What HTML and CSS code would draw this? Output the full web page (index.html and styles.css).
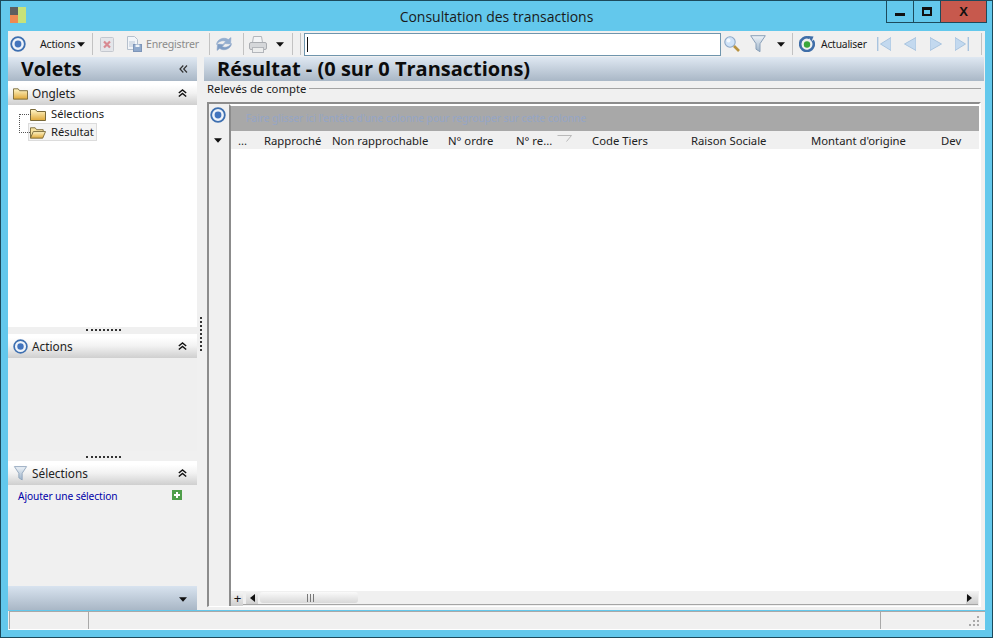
FILE: index.html
```html
<!DOCTYPE html>
<html lang="fr">
<head>
<meta charset="utf-8">
<title>Consultation des transactions</title>
<link rel="stylesheet" href="styles.css">
</head>
<body>
<svg class="defs" width="0" height="0" aria-hidden="true">
  <defs>
    <linearGradient id="fold" x1="0" y1="0" x2="0" y2="1"><stop offset="0" stop-color="#fff6c8"/><stop offset="1" stop-color="#e0a93a"/></linearGradient>
    <linearGradient id="fun" x1="0" y1="0" x2="0" y2="1"><stop offset="0" stop-color="#eef3f8"/><stop offset="1" stop-color="#9db3c9"/></linearGradient>
    <symbol id="target" viewBox="0 0 16 16"><circle cx="8" cy="8" r="6.800" fill="#eef3fa" stroke="#3d6fb0" stroke-width="1.800"/><circle cx="8" cy="8" r="3.400" fill="#4274bd"/></symbol>
    <symbol id="folder" viewBox="0 0 16 13"><path d="M.5 12.500V1.500h5l1.500 2h8.500v9z" fill="url(#fold)" stroke="#7a6a3a"/></symbol>
    <symbol id="folder-open" viewBox="0 0 17 13"><path d="M.5 12.500V1.500h5l1.500 2h7v2" fill="#f7e3a0" stroke="#7a6a3a"/><path d="M.5 12.500l3-7h13l-3 7z" fill="url(#fold)" stroke="#7a6a3a"/></symbol>
    <symbol id="funnel" viewBox="0 0 16 18"><path d="M.7.700h14.600l-5.300 8v8l-4-2.500v-5.500z" fill="url(#fun)" stroke="#8aa0b8"/></symbol>
    <symbol id="up2" viewBox="0 0 9 8"><path d="M.8 4l3.700-3 3.700 3M.8 7.500l3.700-3 3.700 3" fill="none" stroke="#111" stroke-width="1.400"/></symbol>
    <symbol id="left2" viewBox="0 0 9 8"><path d="M4.300.5l-3.300 3.500 3.300 3.500M8 .5l-3.300 3.500 3.300 3.500" fill="none" stroke="#333" stroke-width="1.200"/></symbol>
    <symbol id="caret" viewBox="0 0 9 5"><path d="M0 0h9l-4.500 5z" fill="#111"/></symbol>
  </defs>
</svg>

<div class="window">
  <header class="titlebar">
    <div class="app-logo"><i class="l1"></i><i class="l2"></i><i class="l3"></i></div>
    <h1 class="title">Consultation des transactions</h1>
    <div class="win-btns">
      <div class="wb wb-min"><i></i></div>
      <div class="wb wb-max"><i></i></div>
      <div class="wb wb-close">X</div>
    </div>
  </header>

  <nav class="toolbar">
    <svg class="ic16 t-target"><use href="#target"/></svg>
    <span class="tl t-actions">Actions</span>
    <svg class="caret t-c1"><use href="#caret"/></svg>
    <i class="sep s1"></i>
    <svg class="ic t-del" viewBox="0 0 14 15"><rect x=".5" y=".5" width="13" height="14" rx="1" fill="#e4e6ea" stroke="#c4c8cf"/><path d="M4 4.500l6 6m0-6l-6 6" stroke="#d88a92" stroke-width="2.200"/></svg>
    <svg class="ic t-doc" viewBox="0 0 16 16"><path d="M1.500.5h7l3 3v10h-10z" fill="#f2f5f9" stroke="#b5c0cd"/><path d="M3 6h6M3 8h6M3 10h6" stroke="#b9c6d6"/><rect x="7.500" y="8.500" width="8" height="7" fill="#8fa9cc" stroke="#7d95b8"/><rect x="9.500" y="8.500" width="4" height="2.500" fill="#eef3f8"/></svg>
    <span class="tl dim t-save">Enregistrer</span>
    <i class="sep s2"></i>
    <svg class="ic t-ref" viewBox="0 0 16 16"><path d="M.5 8.500C1 3 8 .5 12.300 3.500L15 1.500l-.5 6.500-7-.5 2.500-2C7 4 3 5 .5 8.500z" fill="#93aed0" stroke="#8aa5c8" stroke-width=".5"/><path d="M15.500 7.500C15 13 8 15.500 3.700 12.500L1 14.500l.5-6.500 7 .5-2.500 2C9 12 13 11 15.500 7.500z" fill="#7f9dc4" stroke="#8aa5c8" stroke-width=".5"/></svg>
    <i class="sep s3"></i>
    <svg class="ic t-print" viewBox="0 0 18 17"><path d="M4.500.5h8l1 6h-10z" fill="#f3f4f6" stroke="#b3b6bb"/><rect x=".5" y="6.500" width="17" height="7" rx="1.500" fill="#d5d7da" stroke="#a9acb1"/><rect x="3.500" y="11.500" width="11" height="5" fill="#eceded" stroke="#b3b6bb"/></svg>
    <svg class="caret t-c2"><use href="#caret"/></svg>
    <i class="sep s4"></i>
    <i class="sep s5"></i>
    <div class="search"><i class="cursor"></i></div>
    <svg class="ic t-mag" viewBox="0 0 16 16"><circle cx="6" cy="6" r="5.200" fill="#cfe3f8" stroke="#8ea8c6" stroke-width="1.100"/><circle cx="4.500" cy="4.500" r="2" fill="#f4f9fe"/><path d="M10 10l5 5" stroke="#b8923f" stroke-width="2.600"/></svg>
    <svg class="ic t-fun"><use href="#funnel"/></svg>
    <svg class="caret t-c3"><use href="#caret"/></svg>
    <i class="sep s6"></i>
    <svg class="ic t-act" viewBox="0 0 16 16"><path d="M13.700 4.500a6.800 6.800 0 1 1-3.300-2.700" fill="none" stroke="#3f6ea8" stroke-width="2.600"/><path d="M8.500 0l6 .5-2 5z" fill="#3f6ea8"/><circle cx="8" cy="8.500" r="3.200" fill="#3aa63a"/></svg>
    <span class="tl t-actu">Actualiser</span>
    <svg class="ic t-n1" viewBox="0 0 14 14"><path d="M3.500 7L14 .5v13z" fill="#c3d9ef" stroke="#a9c4df"/><path d="M.7 0v14" stroke="#a9c4df" stroke-width="1.400"/></svg>
    <svg class="ic t-n2" viewBox="0 0 12 14"><path d="M.5 7L12 .5v13z" fill="#c3d9ef" stroke="#a9c4df"/></svg>
    <svg class="ic t-n3" viewBox="0 0 12 14"><path d="M11.500 7L0 .5v13z" fill="#c3d9ef" stroke="#a9c4df"/></svg>
    <svg class="ic t-n4" viewBox="0 0 14 14"><path d="M10.500 7L0 .5v13z" fill="#c3d9ef" stroke="#a9c4df"/><path d="M13.300 0v14" stroke="#a9c4df" stroke-width="1.400"/></svg>
    <i class="sep s7"></i>
  </nav>

  <div class="main">
    <aside class="panes">
      <div class="big-head">
        <h2>Volets</h2>
        <svg class="chev"><use href="#left2"/></svg>
      </div>
      <section class="pane-head">
        <svg class="ph-ic"><use href="#folder"/></svg>
        <span>Onglets</span>
        <svg class="chev"><use href="#up2"/></svg>
      </section>
      <div class="tree">
        <div class="node n-sel"><svg class="nf"><use href="#folder"/></svg><span>Sélections</span></div>
        <div class="node n-res"><div class="picked"><svg class="nf"><use href="#folder-open"/></svg><span>Résultat</span></div></div>
      </div>
      <div class="grip"></div>
      <section class="pane-head">
        <svg class="ph-ic"><use href="#target"/></svg>
        <span>Actions</span>
        <svg class="chev"><use href="#up2"/></svg>
      </section>
      <div class="act-body"></div>
      <div class="grip"></div>
      <section class="pane-head">
        <svg class="ph-ic"><use href="#funnel"/></svg>
        <span>Sélections</span>
        <svg class="chev"><use href="#up2"/></svg>
      </section>
      <div class="sel-body">
        <a class="add-link">Ajouter une sélection</a>
        <svg class="plus" viewBox="0 0 10 10"><rect width="10" height="10" fill="#4f9e4a"/><path d="M5 2v6M2 5h6" stroke="#fff" stroke-width="2"/></svg>
      </div>
      <div class="pane-foot"><svg class="caret"><use href="#caret"/></svg></div>
    </aside>

    <div class="splitter"><i></i></div>

    <main class="result">
      <div class="big-head res-head"><h2>Résultat - (0 sur 0 Transactions)</h2></div>
      <div class="legend"><span>Relevés de compte</span><i></i></div>
      <div class="grid">
        <div class="g-side">
          <svg class="g-target"><use href="#target"/></svg>
          <svg class="caret g-caret"><use href="#caret"/></svg>
          <div class="g-plus">+</div>
        </div>
        <div class="g-main">
          <div class="g-group">Faire glisser ici l'entête d'une colonne pour regrouper sur cette colonne</div>
          <div class="g-cols">
            <span>...</span>
            <span>Rapproché</span>
            <span>Non rapprochable</span>
            <span>N° ordre</span>
            <span class="sorted">N° re...<svg class="tri" viewBox="0 0 15 7"><path d="M.5.500h14l-5 6" fill="none" stroke="#b9b9b9"/></svg></span>
            <span>Code Tiers</span>
            <span>Raison Sociale</span>
            <span>Montant d'origine</span>
            <span>Dev</span>
          </div>
          <div class="g-rows"></div>
          <div class="g-scroll">
            <div class="sb-btn"><svg viewBox="0 0 5 8"><path d="M5 0v8L0 4z" fill="#111"/></svg></div>
            <div class="sb-track"><div class="sb-thumb"><i></i><i></i><i></i></div></div>
            <div class="sb-btn sb-end"><svg viewBox="0 0 5 8"><path d="M0 0v8l5-4z" fill="#111"/></svg></div>
          </div>
        </div>
      </div>
    </main>
  </div>

  <footer class="status">
    <div class="st st1"></div>
    <div class="st st2"></div>
    <div class="st st3">
      <svg class="resize" viewBox="0 0 11 11"><path d="M8 0h2v2H8zM4 4h2v2H4zM8 4h2v2H8zM0 8h2v2H0zM4 8h2v2H4zM8 8h2v2H8z" fill="#a9a9a9"/></svg>
    </div>
  </footer>
</div>
</body>
</html>
```
FILE: styles.css
```css
* { box-sizing: border-box; }
html, body { margin: 0; padding: 0; }
body { width: 993px; height: 638px; overflow: hidden; font-family: "Noto Sans", "Open Sans", sans-serif; font-size: 11.3px; color: #1a1a1a; }
i { display: block; }
svg { display: block; flex: none; }
.defs { position: absolute; }

.window { width: 993px; height: 638px; background: #63c8ec; border: 1px solid #1c4a5c; padding: 0 7px 7px; display: flex; flex-direction: column; }

.titlebar { height: 30px; flex: none; display: grid; grid-template-columns: 1fr auto 1fr; align-items: start; }
.app-logo { width: 16px; height: 16px; margin: 6px 0 0 2px; display: grid; grid-template-columns: 8px 8px; grid-template-rows: 8px 8px; }
.app-logo .l1 { background: #5f5f5f; }
.app-logo .l2 { background: #c7e27a; grid-row: 1 / 3; grid-column: 2; }
.app-logo .l3 { background: #ef8a52; }
.title { margin: 7px 0 0; font: 400 14px/18px "Open Sans", sans-serif; color: #1a1a1a; }
.win-btns { justify-self: end; display: flex; height: 22px; margin-right: -2px; border: 1px solid #1c4a5c; border-top: 0; }
.wb { width: 27px; display: flex; align-items: center; justify-content: center; border-right: 1px solid #1c4a5c; }
.wb-min i { width: 10px; height: 3px; background: #111; margin-top: 5px; }
.wb-max i { width: 10px; height: 9px; border: 2px solid #111; border-top-width: 3px; }
.wb-close { width: 45px; background: #c7594d; border-right: 0; font: 700 13px "Liberation Sans", sans-serif; color: #111; }

.toolbar { height: 26px; flex: none; background: #f0f0f0; display: flex; align-items: center; position: relative; }
.tl { font-size: 10.6px; letter-spacing: -.2px; white-space: nowrap; flex: none; }
.dim { color: #8b8b8b; }
.sep { width: 1px; height: 22px; background: #c2c2c2; flex: none; }
.ic { width: 16px; height: 16px; }
.ic16 { width: 16px; height: 16px; }
.caret { width: 8px; height: 5px; }

.t-target { margin-left: 2px; }
.t-actions { margin-left: 14px; width: 36px; }
.t-c1 { margin-left: 1px; }
.s1 { margin-left: 7px; }
.t-del { margin-left: 7px; width: 14px; height: 15px; }
.t-doc { margin-left: 12px; }
.t-save { margin-left: 4px; width: 54px; }
.s2 { margin-left: 9px; }
.t-ref { margin-left: 6px; }
.s3 { margin-left: 11px; }
.t-print { margin-left: 5px; width: 18px; height: 17px; }
.t-c2 { margin-left: 9px; }
.s4 { margin-left: 8px; }
.s5 { margin-left: 7px; }
.search { margin-left: 3px; width: 417px; height: 23px; background: #fff; border: 1px solid #6f95ad; flex: none; padding: 3px 2px; }
.cursor { width: 1px; height: 15px; background: #111; }
.t-mag { margin-left: 3px; }
.t-fun { margin-left: 10px; height: 18px; }
.t-c3 { margin-left: 11px; }
.s6 { margin-left: 7px; }
.t-act { margin-left: 6px; }
.t-actu { margin-left: 6px; width: 47px; font-size: 10.300px; }
.t-n1 { margin-left: 9px; width: 14px; height: 14px; }
.t-n2 { margin-left: 13px; width: 12px; height: 14px; }
.t-n3 { margin-left: 14px; width: 12px; height: 14px; }
.t-n4 { margin-left: 13px; width: 14px; height: 14px; }
.s7 { margin-left: 12px; }

.main { flex: 1; min-height: 0; display: flex; background: #f0f0f0; }
.panes { width: 189px; flex: none; display: flex; flex-direction: column; }
.big-head { height: 24px; flex: none; background: linear-gradient(#dfe8f2, #a9b7c6); display: flex; align-items: center; justify-content: space-between; padding: 0 9px 0 13px; }
.big-head h2 { margin: 0; font: 700 19.500px/24px "Open Sans", sans-serif; color: #0c0c0c; white-space: nowrap; }
.res-head h2 { font-size: 20px; }
.chev { width: 9px; height: 8px; }
.pane-head { height: 24px; flex: none; background: linear-gradient(#ffffff 15%, #f2f2f2 50%, #cfcfcf); display: flex; align-items: center; padding: 0 10px 0 5px; }
.pane-head span { flex: 1; margin-left: 4px; font-size: 11.800px; color: #222; }
.ph-ic { width: 15px; height: 15px; }

.tree { height: 222px; flex: none; background: #fff; padding-left: 20px; }
.node { height: 18px; display: flex; align-items: center; position: relative; font-size: 11.200px; }
.node span { margin: -2px 0 0 5px; }
.nf { width: 16px; height: 13px; margin-left: 2px; }
.n-sel::before { content: ""; position: absolute; left: -9px; top: 9px; width: 11px; height: 18px; border-left: 1px dotted #555; border-top: 1px dotted #555; }
.n-res::before { content: ""; position: absolute; left: -9px; top: 9px; width: 11px; border-top: 1px dotted #555; }
.picked { height: 18px; width: 69px; display: flex; align-items: center; background: #f4f4f4; border: 1px solid #dcdcdc; padding-left: 1px; }
.picked .nf { margin-left: 0; }

.grip { height: 7px; flex: none; background: #f0f0f0; position: relative; }
.grip::after { content: ""; position: absolute; left: 78px; top: 2px; width: 35px; border-top: 2px dotted #333; }
.act-body { height: 93px; flex: none; background: #efefef; }
.act-body + .grip { height: 10px; }
.act-body + .grip::after { top: 5px; }
.sel-body { flex: 1; display: flex; align-items: flex-start; justify-content: space-between; padding: 4px 15px 0 10px; background: #f0f0f0; }
.add-link { color: #0000a8; font-size: 10.200px; letter-spacing: -.1px; }
.plus { width: 10px; height: 10px; margin-top: 1px; }
.pane-foot { height: 24px; flex: none; background: linear-gradient(#d8e3ef, #a9b7c6); display: flex; align-items: center; justify-content: flex-end; padding: 3px 10px 0 0; }

.splitter { width: 7px; flex: none; display: flex; align-items: center; justify-content: center; }
.splitter i { width: 0; height: 34px; border-left: 2px dotted #333; }

.result { flex: 1; min-width: 0; display: flex; flex-direction: column; }
.res-head { padding-left: 13px; margin-right: 1px; }
.legend { height: 21px; flex: none; display: flex; align-items: center; padding: 0 4px 6px 3px; }
.legend span { font-size: 11.300px; white-space: nowrap; }
.legend i { flex: 1; margin-left: 3px; height: 1px; background: #a3a3a3; }
.grid { width: 774px; height: 505px; margin-left: 3px; border: 1px solid #8c8c8c; border-top-width: 2px; border-left-width: 2px; border-right: 2px solid #fff; border-bottom-color: #fff; display: flex; background: #f0f0f0; }
.g-side { width: 20px; flex: none; display: flex; flex-direction: column; align-items: center; position: relative; padding-right: 2px; }
.g-target { width: 16px; height: 16px; margin-top: 3px; }
.g-caret { margin-top: 15px; }
.g-plus { position: absolute; left: 22px; bottom: 0; width: 12px; height: 14px; padding-left: 1px; background: linear-gradient(#f4f4f4, #cfcfcf); font: 13px/13px "Liberation Sans", sans-serif; color: #111; text-align: center; z-index: 1; }
.g-main { flex: 1; min-width: 0; display: flex; flex-direction: column; border-left: 2px solid #8c8c8c; border-top: 2px solid #fff; }
.g-group { height: 25px; flex: none; background: #a8a8a8; color: #94a5c6; font-size: 10.200px; line-height: 25px; padding-left: 15px; white-space: nowrap; overflow: hidden; }
.g-cols { height: 18px; flex: none; display: grid; grid-template-columns: 26px 68px 116px 68px 76px 99px 120px 130px 1fr; padding-left: 7px; background: #f0f0f0; font-size: 11.300px; line-height: 20px; color: #222; white-space: nowrap; }
.sorted { display: flex; align-items: center; }
.tri { width: 15px; height: 7px; margin: -6px 0 0 5px; }
.g-rows { flex: 1; background: #fff; }
.g-scroll { height: 14px; flex: none; display: flex; background: #f0f0f0; padding-left: 15px; margin: 0 1px 1px 0; border-bottom: 1px solid #a5a5a5; }
.sb-btn { width: 12px; height: 13px; background: linear-gradient(#f4f4f4, #cfcfcf); display: flex; align-items: center; justify-content: center; flex: none; }
.sb-end { padding-right: 5px; }
.sb-btn svg { width: 5px; height: 8px; }
.sb-track { flex: 1; padding: 1px 0 1px 2px; }
.sb-thumb { width: 98px; height: 11px; background: linear-gradient(#fafafa, #d8d8d8); border-radius: 3px; display: flex; justify-content: center; gap: 1px; padding: 2px 0 1px 3px; }
.sb-thumb i { width: 1px; background: #777; margin-right: 1px; }

.status { height: 19px; flex: none; display: flex; background: #f0f0f0; border-bottom: 1px solid #fff; margin-top: 1px; padding-left: 1px; }
.st { border-top: 1px solid #a9a9a9; border-left: 1px solid #a9a9a9; }
.st1 { width: 79px; }
.st2 { width: 792px; }
.st3 { flex: 1; display: flex; align-items: flex-end; justify-content: flex-end; padding: 0 5px 2px 0; }
.resize { width: 11px; height: 11px; }
```
